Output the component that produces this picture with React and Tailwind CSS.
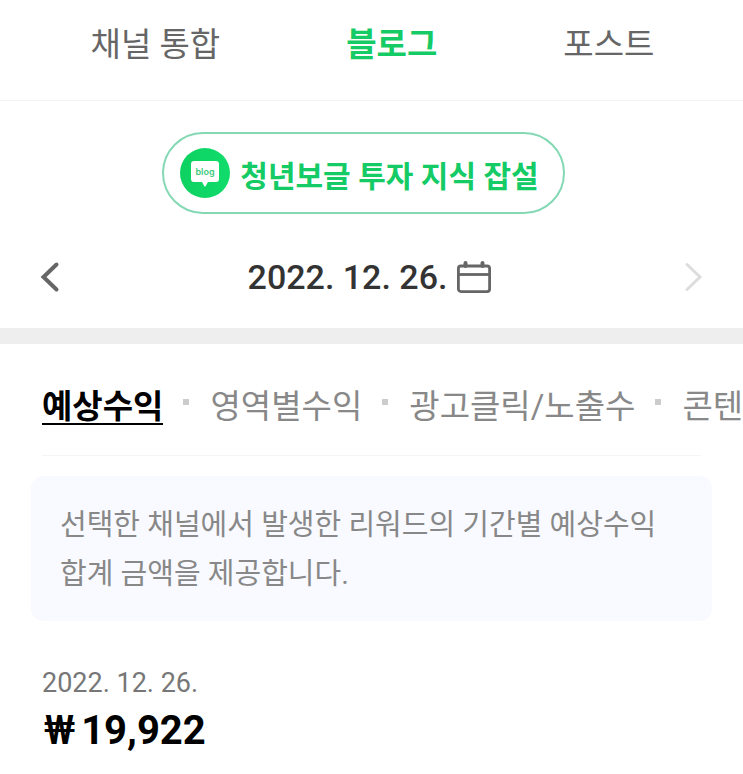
import React, { useState } from 'react';

const channels = [
  { id: 'all', label: '채널 통합' },
  { id: 'blog', label: '블로그' },
  { id: 'post', label: '포스트' },
];

const reports = [
  { id: 'revenue', label: '예상수익' },
  { id: 'area', label: '영역별수익' },
  { id: 'clicks', label: '광고클릭/노출수' },
  { id: 'contents', label: '콘텐' },
];

const BlogIcon = () => (
  <svg className="h-[50px] w-[50px] shrink-0" viewBox="0 0 50 50" aria-hidden="true">
    <defs>
      <linearGradient id="blog-fill" x1="0" y1="0" x2="1" y2="0">
        <stop offset="0" stopColor="#0ed160" />
        <stop offset="1" stopColor="#10dc6c" />
      </linearGradient>
    </defs>
    <circle cx="25" cy="25" r="25" fill="url(#blog-fill)" />
    <path
      d="M14 13h22a3 3 0 0 1 3 3v15a3 3 0 0 1-3 3h-8l-2.300 4a.9.900 0 0 1-1.500 0L22 34h-8a3 3 0 0 1-3-3V16a3 3 0 0 1 3-3z"
      fill="#fff"
    />
    <text
      x="25"
      y="27"
      textAnchor="middle"
      fontSize="9"
      fontWeight="600"
      fontFamily="Inter, sans-serif"
      fill="#3ccb7c"
    >
      blog
    </text>
  </svg>
);

const CalendarIcon = () => (
  <svg className="h-8 w-[34px]" viewBox="0 0 34 32" fill="none" stroke="#666" strokeWidth="2.800" aria-hidden="true">
    <rect x="1.400" y="5" width="31.200" height="25.600" rx="2.500" />
    <path d="M1.400 13.500h31.200" />
    <path d="M8.500 2v3M25.500 2v3" strokeWidth="4" strokeLinecap="round" />
  </svg>
);

const App = () => {
  const [channel, setChannel] = useState('blog');
  const [report, setReport] = useState('revenue');

  return (
    <div className="overflow-hidden bg-white font-['Roboto','Noto_Sans_CJK_KR',sans-serif] text-[#333]">
      {/* Channel tabs */}
      <nav className="flex h-[101px] justify-center gap-[126px] border-b border-[#f2f2f2] pb-[10px] pl-[2px]">
        {channels.map((item) => (
          <button
            key={item.id}
            onClick={() => setChannel(item.id)}
            className={`text-[33px] ${
              channel === item.id ? 'font-bold text-[#14cb65]' : 'text-[#666]'
            }`}
          >
            {item.label}
          </button>
        ))}
      </nav>

      {/* Selected blog */}
      <div className="flex justify-center pt-[31px] pr-4">
        <button className="flex h-[82px] items-center gap-[10px] rounded-full border-2 border-[#84d9b4] pl-4 pr-6 text-[30px] font-bold text-[#14cb65]">
          <BlogIcon />
          <span className="pt-[6px]">청년보글 투자 지식 잡설</span>
        </button>
      </div>

      {/* Date picker */}
      <div className="flex h-[114px] items-center justify-between px-10 pt-3">
        <button aria-label="이전 날짜">
          <svg className="h-8 w-5" viewBox="0 0 20 32" fill="none" stroke="#666" strokeWidth="4" strokeLinecap="round" aria-hidden="true">
            <path d="M16.500 3.500 3.500 16l13 12.500" />
          </svg>
        </button>
        <button className="flex items-center gap-[10px] pr-1 text-[34px] font-medium">
          2022. 12. 26.
          <CalendarIcon />
        </button>
        <button aria-label="다음 날짜">
          <svg className="h-8 w-5" viewBox="0 0 20 32" fill="none" stroke="#ddd" strokeWidth="3" strokeLinecap="round" aria-hidden="true">
            <path d="m4 3.500 13 12.500L4 28.500" />
          </svg>
        </button>
      </div>
      <div className="h-4 bg-[#eee]" />

      {/* Report tabs */}
      <nav className="ml-[42px] flex h-[111px] items-center whitespace-nowrap pt-4">
        {reports.map((item, index) => (
          <React.Fragment key={item.id}>
            {index > 0 && <span className="mb-3 ml-5 mr-[21px] h-[6px] w-[6px] shrink-0 bg-[#ccc]" />}
            <button
              onClick={() => setReport(item.id)}
              className={`shrink-0 border-b-2 text-[33px] leading-8 ${
                report === item.id ? 'border-black font-bold text-black' : 'border-transparent text-[#888]'
              }`}
            >
              {item.label}
            </button>
          </React.Fragment>
        ))}
      </nav>
      <hr className="mx-[42px] border-[#f5f5f5]" />

      <p className="mx-[31px] mt-5 break-keep rounded-xl bg-[#f8faff] px-[29px] pt-[25px] pb-[22px] text-[29px] leading-[49px] text-[#888]">
        선택한 채널에서 발생한 리워드의 기간별 예상수익 합계 금액을 제공합니다.
      </p>

      {/* Revenue */}
      <section className="px-[42px] pt-[46px]">
        <p className="text-[27px] leading-8 text-[#777]">2022. 12. 26.</p>
        <p className="mt-2 flex gap-[6px] pl-[2px] text-[40px] font-bold leading-12 text-black">
          <span className="font-medium">₩</span>
          <span>19,922</span>
        </p>
      </section>
    </div>
  );
};

export default App;
